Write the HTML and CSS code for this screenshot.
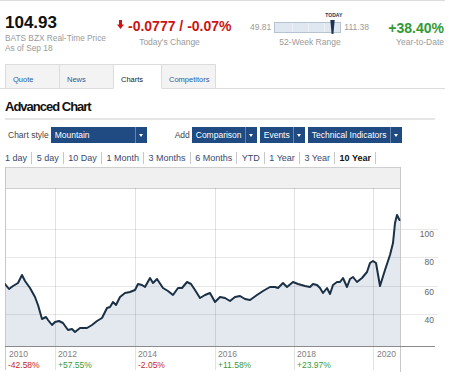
FILE: index.html
```html
<!DOCTYPE html>
<html>
<head>
<meta charset="utf-8">
<link rel="stylesheet" href="styles.css">
</head>
<body>
<div class="page">
  <div class="quote-head">
    <div class="quote-row">
      <div class="price-block">
        <div class="price">104.93</div>
        <div class="sub">BATS BZX Real-Time Price</div>
        <div class="sub">As of Sep 18</div>
      </div>
      <div class="change-block">
        <div class="change-val">
          <svg class="down-arrow" width="7" height="9" viewBox="0 0 7 9"><path d="M2 0H5V4.5H7L3.5 9L0 4.5H2Z" fill="#cc1414"/></svg>
          <span>-0.0777 / -0.07%</span>
        </div>
        <div class="label change-label">Today's Change</div>
      </div>
      <div class="range-block">
        <div class="range-val">
          <span>49.81</span>
          <div class="range-bar">
            <span class="today">TODAY</span>
            <svg class="marker" width="5" height="14" viewBox="0 0 5 14"><path d="M0.3 0H4.7L3.4 14H1.6Z" fill="#1b3452"/></svg>
          </div>
          <span>111.38</span>
        </div>
        <div class="label">52-Week Range</div>
      </div>
      <div class="ytd-block">
        <div class="ytd-val">+38.40%</div>
        <div class="label">Year-to-Date</div>
      </div>
    </div>
    <div class="tabs">
      <div class="tab w55">Quote</div>
      <div class="tab w55">News</div>
      <div class="tab active w49">Charts</div>
      <div class="tab w55">Competitors</div>
    </div>
  </div>

  <div class="content">
    <h1 class="title">Advanced Chart</h1>
    <div class="controls">
      <span class="ctl-label">Chart style</span>
      <div class="dd w96"><span class="dd-text">Mountain</span><span class="dd-arrow"><i></i></span></div>
      <span class="ctl-label add">Add</span>
      <div class="dd w65"><span class="dd-text">Comparison</span><span class="dd-arrow"><i></i></span></div>
      <div class="dd w45"><span class="dd-text">Events</span><span class="dd-arrow"><i></i></span></div>
      <div class="dd w94"><span class="dd-text">Technical Indicators</span><span class="dd-arrow"><i></i></span></div>
    </div>
    <div class="ranges">
      <span class="rg">1 day</span><span class="rg">5 day</span><span class="rg">10 Day</span><span class="rg">1 Month</span><span class="rg">3 Months</span><span class="rg">6 Months</span><span class="rg">YTD</span><span class="rg">1 Year</span><span class="rg">3 Year</span><span class="rg cur">10 Year</span>
    </div>
    <svg class="chart" width="440" height="210" viewBox="5 167 440 210">
      <rect class="strip" x="5.5" y="167.5" width="395" height="21"/>
      <polygon class="area" points="5,284 9,289 13,286 18,283 22,275 25,281 30,288 35,297 38,305 42,319 46,317 48,320 52,325 55,322 59,321 63,323 68,330 72,329 75,332 80,328 87,328 92,325 97,321 102,318 107,308 110,307 113,302 116,305 120,297 125,293 130,292 135,290 138,284 142,285 145,287 150,278 153,283 157,279 163,288 168,291 173,295 178,288 182,288 187,282 191,284 195,290 200,298 205,295 210,293 215,302 220,297 225,298 230,301 235,297 240,296 245,299 250,300 257,295 263,291 270,287 275,287 278,288 283,283 287,287 293,282 298,284 305,286 310,287 313,284 317,285 320,288 323,293 327,288 330,294 333,285 337,282 340,282 343,278 347,287 350,279 353,277 357,282 362,278 367,272 370,263 373,261 376,263 380,286 385,270 390,255 393,243 395,223 397,215 400,220 400,346 5,346"/>
      <g class="hgrid">
        <line x1="5" y1="229.5" x2="438" y2="229.5"/>
        <line x1="5" y1="257.5" x2="438" y2="257.5"/>
        <line x1="5" y1="286.5" x2="438" y2="286.5"/>
        <line x1="5" y1="314.5" x2="438" y2="314.5"/>
      </g>
      <g class="vgrid">
        <line x1="55.5" y1="188" x2="55.5" y2="370"/>
        <line x1="135.5" y1="188" x2="135.5" y2="370"/>
        <line x1="215.5" y1="188" x2="215.5" y2="370"/>
        <line x1="294.5" y1="188" x2="294.5" y2="370"/>
        <line x1="373.5" y1="188" x2="373.5" y2="370"/>
      </g>
      <g class="frame">
        <line x1="5.5" y1="167" x2="5.5" y2="370"/>
        <line x1="400.5" y1="167" x2="400.5" y2="372"/>
      </g>
      <polyline class="line" points="5,284 9,289 13,286 18,283 22,275 25,281 30,288 35,297 38,305 42,319 46,317 48,320 52,325 55,322 59,321 63,323 68,330 72,329 75,332 80,328 87,328 92,325 97,321 102,318 107,308 110,307 113,302 116,305 120,297 125,293 130,292 135,290 138,284 142,285 145,287 150,278 153,283 157,279 163,288 168,291 173,295 178,288 182,288 187,282 191,284 195,290 200,298 205,295 210,293 215,302 220,297 225,298 230,301 235,297 240,296 245,299 250,300 257,295 263,291 270,287 275,287 278,288 283,283 287,287 293,282 298,284 305,286 310,287 313,284 317,285 320,288 323,293 327,288 330,294 333,285 337,282 340,282 343,278 347,287 350,279 353,277 357,282 362,278 367,272 370,263 373,261 376,263 380,286 385,270 390,255 393,243 395,223 397,215 399.5,220"/>
      <line class="axis" x1="5" y1="346.5" x2="435" y2="346.5"/>
      <g class="ylab">
        <text x="434" y="236.5">100</text>
        <text x="434" y="265">80</text>
        <text x="434" y="294.5">60</text>
        <text x="434" y="322.5">40</text>
      </g>
      <g class="xlab">
        <text x="9" y="356.5">2010</text>
        <text x="58" y="356.5">2012</text>
        <text x="138" y="356.5">2014</text>
        <text x="218" y="356.5">2016</text>
        <text x="297" y="356.5">2018</text>
        <text x="377" y="356.5">2020</text>
      </g>
      <g class="pct">
        <text class="neg" x="8" y="367.5">-42.58%</text>
        <text class="pos" x="58" y="367.5">+57.55%</text>
        <text class="neg" x="138" y="367.5">-2.05%</text>
        <text class="pos" x="218" y="367.5">+11.58%</text>
        <text class="pos" x="297" y="367.5">+23.97%</text>
      </g>
    </svg>
  </div>
</div>
</body>
</html>
```

FILE: styles.css
```css
* { box-sizing: border-box; }
html, body { margin: 0; padding: 0; background: #fff; }
body { font-family: "Liberation Sans", Arial, sans-serif; color: #222; }

.page { width: 450px; }

.quote-head {
  width: 445px;
  border-top: 1px solid #dcdcdc;
  border-bottom: 1px solid #dcdcdc;
  padding-top: 12px;
}
.quote-row {
  display: flex;
  align-items: flex-start;
  padding-left: 5px;
  padding-right: 1px;
  height: 40px;
}
.price-block { width: 112px; }
.price {
  font-size: 17px;
  font-weight: bold;
  line-height: 20px;
  color: #111;
}
.sub {
  font-size: 8.3px;
  line-height: 10px;
  color: #9a9a9a;
  white-space: nowrap;
}
.label {
  font-size: 8.5px;
  line-height: 10px;
  color: #9a9a9a;
  white-space: nowrap;
}

.change-block { width: 115px; }
.change-val {
  display: flex;
  align-items: flex-start;
  margin-top: 4px;
  line-height: 18px;
  font-size: 14px;
  font-weight: bold;
  color: #cc1414;
  white-space: nowrap;
}
.down-arrow { margin-top: 3px; margin-right: 4px; flex: none; }
.change-label { text-align: center; padding-right: 10px; margin-top: 2px; }

.range-block { margin-left: 18px; width: 120px; }
.range-val {
  display: flex;
  align-items: center;
  margin-top: 9px;
  height: 11px;
  font-size: 8.5px;
  line-height: 11px;
  color: #9a9a9a;
}
.range-bar {
  position: relative;
  width: 67px;
  height: 11px;
  margin: 0 3px;
  border: 1px solid #b7c3d0;
  background-color: #dfe7f0;
  background-image: linear-gradient(90deg, transparent 17px, #eef2f7 17px, #eef2f7 18px, transparent 18px, transparent 33px, #eef2f7 33px, #eef2f7 34px, transparent 34px, transparent 49px, #eef2f7 49px, #eef2f7 50px, transparent 50px);
}
.today {
  position: absolute;
  left: 50px;
  top: -10px;
  font-size: 5px;
  line-height: 5px;
  font-weight: bold;
  color: #1b3452;
}
.marker { position: absolute; left: 55px; top: -3px; }
.range-block .label { text-align: center; margin-top: 4px; }

.ytd-block { margin-left: auto; text-align: right; }
.ytd-val {
  margin-top: 6px;
  font-size: 14px;
  font-weight: bold;
  line-height: 18px;
  color: #339933;
}

.tabs {
  display: flex;
  margin-top: 11px;
  margin-left: 5px;
  margin-bottom: -1px;
}
.tab {
  height: 25px;
  border: 1px solid #dcdcdc;
  background: #f3f3f3;
  margin-right: -1px;
  padding: 10px 0 0 7px;
  font-size: 7.5px;
  line-height: 10px;
  color: #2b5c9c;
}
.tab.active { background: #fff; border-bottom-color: #fff; color: #222; position: relative; }
.w55 { width: 55px; }
.w49 { width: 49px; }

.content { padding-left: 5px; }
.title {
  margin: 10px 0 0 0;
  width: 430px;
  font-size: 13px;
  font-weight: bold;
  letter-spacing: -1px;
  line-height: 16px;
  padding-bottom: 3px;
  border-bottom: 2px solid #e6e6e6;
  color: #111;
}

.controls {
  display: flex;
  align-items: center;
  margin-top: 7px;
  height: 16px;
}
.ctl-label {
  font-size: 8.5px;
  color: #444;
  margin-left: 3px;
  margin-right: 2px;
  white-space: nowrap;
}
.ctl-label.add { margin-left: 25px; margin-right: 2px; }
.dd {
  display: flex;
  height: 16px;
  background: #1f4a82;
  color: #fff;
  font-size: 8.5px;
  line-height: 16px;
  margin-right: 3px;
}
.dd-text { flex: 1; padding-left: 4px; white-space: nowrap; overflow: hidden; }
.dd-arrow {
  width: 12px;
  border-left: 1px solid #6584ad;
  display: flex;
  align-items: center;
  justify-content: center;
}
.dd-arrow i {
  display: block;
  width: 0;
  height: 0;
  border-left: 2px solid transparent;
  border-right: 2px solid transparent;
  border-top: 3px solid #fff;
}
.w96 { width: 96px; }
.w65 { width: 65px; }
.w45 { width: 45px; }
.w94 { width: 94px; }

.ranges {
  display: flex;
  margin-top: 9px;
  font-size: 9px;
  line-height: 12px;
  color: #3a4a70;
}
.rg {
  padding: 0 4.3px;
  border-right: 1px solid #c8c8c8;
  white-space: nowrap;
}
.rg:first-child { padding-left: 0; }
.rg.cur { font-weight: bold; color: #111; }

.chart { display: block; margin-top: 3px; }
.strip { fill: #f0f0f0; stroke: #cfcfcf; stroke-width: 1; }
.area { fill: #e4e9f0; }
.hgrid line { stroke: #000; stroke-opacity: 0.09; stroke-width: 1; }
.vgrid line { stroke: #000; stroke-opacity: 0.11; stroke-width: 1; }
.frame line { stroke: #c8c8c8; stroke-width: 1; }
.line { fill: none; stroke: #1a3045; stroke-width: 2; stroke-linejoin: round; stroke-linecap: round; }
.axis { stroke: #8a8a8a; stroke-width: 1; }
.ylab text { font-family: "Liberation Sans", Arial, sans-serif; font-size: 8.5px; fill: #666; text-anchor: end; }
.xlab text { font-family: "Liberation Sans", Arial, sans-serif; font-size: 8.5px; fill: #808080; }
.pct text { font-family: "Liberation Sans", Arial, sans-serif; font-size: 8.5px; }
.pct .neg { fill: #c62828; }
.pct .pos { fill: #3a9a3a; }
```
